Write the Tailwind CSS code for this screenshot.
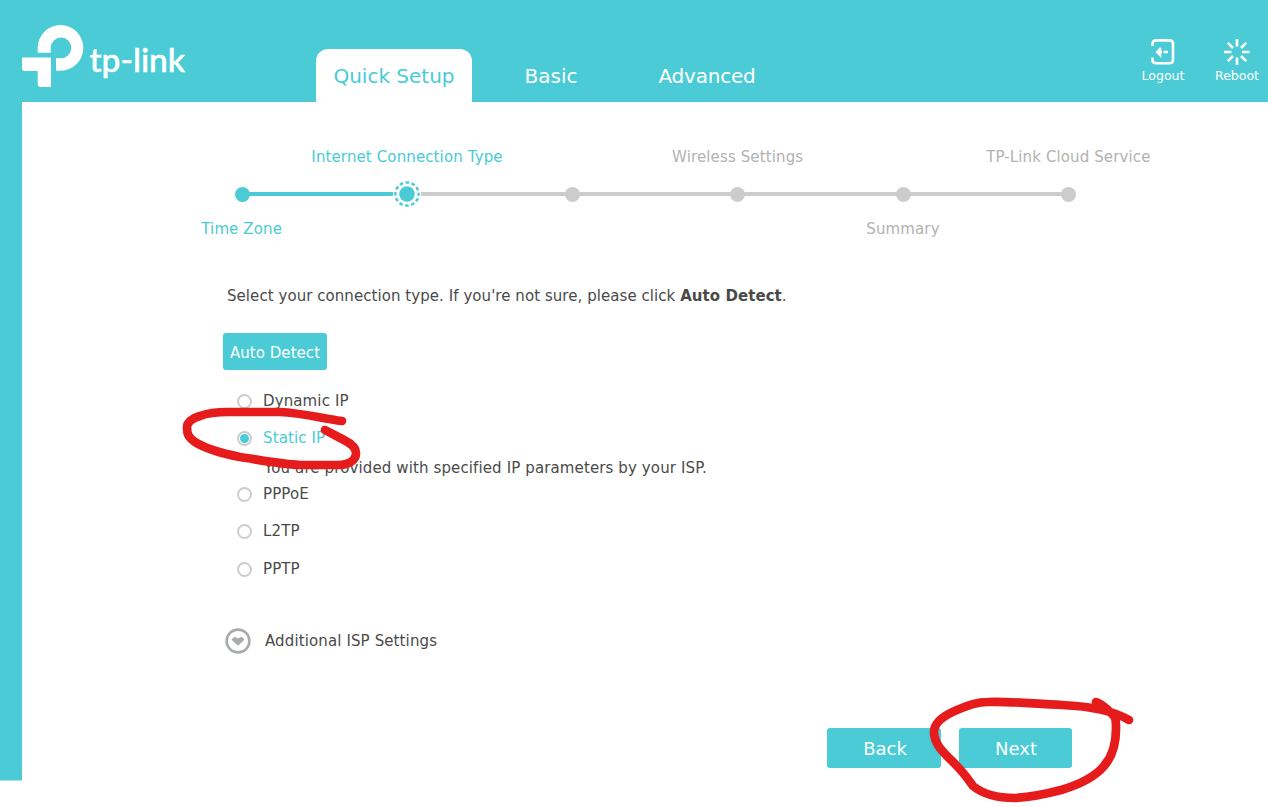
<!DOCTYPE html>
<html lang="en">
<head>
<meta charset="utf-8">
<title>Quick Setup</title>
<script src="https://cdn.jsdelivr.net/npm/@tailwindcss/browser@4"></script>
</head>
<body class="bg-white">
<div class="relative flex h-[807px] w-[1268px] flex-col overflow-hidden bg-white font-['Verdana','DejaVu_Sans',sans-serif] text-[15px] tracking-[0.12px] text-[#4a4a4a]">
  <header class="flex h-[102px] shrink-0 bg-[#4acbd6] tracking-normal text-white">
    <div class="w-[316px]">
      <svg class="block" width="220" height="102" viewBox="0 0 220 102" fill="#fff">
        <path d="M37.7 52.8V47.8A22.8 22.8 0 1 1 60.5 70.7H56V58.2H60.5A10.3 10.3 0 1 0 50.7 47.8V52.8Z"/>
        <path d="M22 57.5H51V87H41Q37.7 87 37.7 83.7V70.9H25Q22 70.9 22 68Z"/>
        <text x="89.5" y="71.5" font-family="Lato, sans-serif" font-size="33" font-weight="500" stroke="#fff" stroke-width=".5" textLength="95.5" lengthAdjust="spacingAndGlyphs">tp-link</text>
      </svg>
    </div>
    <nav class="flex items-end text-[20px]">
      <a class="flex h-[53px] w-[156px] items-center justify-center rounded-t-[12px] bg-white text-[#4acbd6]"><span>Quick Setup</span></a>
      <a class="flex h-[53px] w-[157px] items-center justify-center pl-px"><span>Basic</span></a>
      <a class="flex h-[53px] w-[156px] items-center justify-center tracking-[-0.2px]"><span>Advanced</span></a>
    </nav>
    <div class="ml-auto flex pt-[38px] text-[12.5px] leading-[20px]">
      <a class="flex w-[74px] flex-col items-center">
        <svg width="28" height="28" viewBox="0 0 28 28" fill="none" stroke="#fff" stroke-width="2.6"><path d="M3.4 8V6Q3.4 2.4 7 2.4H20.5Q24 2.4 24 6V21.8Q24 25.2 20.5 25.2H7Q3.4 25.2 3.4 21.8V19.5"/><path d="M11.5 9.8L7.5 14L11.5 18.2V9.8" fill="#fff" stroke-width="1.5"/><path d="M8.5 14H13M14.5 14H19"/></svg>
        <span>Logout</span>
      </a>
      <a class="flex w-[74px] flex-col items-center">
        <svg width="28" height="28" viewBox="0 0 28 28" stroke="#fff" stroke-width="2.6"><path d="M14 1V8.5M14 19.5V27M1 14H8.5M19 14H26.5M4.8 4.8L10 10M18 18L23.2 23.2M4.8 23.2L10 18M18 10L23.2 4.8"/></svg>
        <span>Reboot</span>
      </a>
      <div class="-mr-[6px]"></div>
    </div>
  </header>
  <div class="flex grow">
    <aside class="h-[679px] w-[22px] shrink-0 border-b border-[#a5e5eb] bg-[#4acbd6]"></aside>
    <main class="flex grow flex-col pt-[44px]">
      <section class="ml-[137px] w-[992px] text-[#b2b2b2]">
        <div class="grid h-[20px] grid-cols-6 leading-[22px] whitespace-nowrap">
          <span></span>
          <span class="flex justify-center text-[#4acbd6]">Internet Connection Type</span>
          <span></span>
          <span class="flex justify-center">Wireless Settings</span>
          <span></span>
          <span class="flex justify-center">TP-Link Cloud Service</span>
        </div>
        <svg class="block" width="992" height="52" viewBox="0 0 992 52">
          <path d="M83 28H234" stroke="#4acbd6" stroke-width="4"/>
          <path d="M262 28H909" stroke="#ccc" stroke-width="4"/>
          <g fill="#4acbd6"><circle cx="83.5" cy="28.5" r="7.5"/><circle cx="248" cy="28" r="7.8"/></g>
          <circle cx="248" cy="28" r="11.6" fill="none" stroke="#4acbd6" stroke-width="2.5" stroke-dasharray="3.6 2.4737" stroke-dashoffset="1.8"/>
          <g fill="#ccc"><circle cx="413.5" cy="28.5" r="7.5"/><circle cx="578.5" cy="28.5" r="7.5"/><circle cx="744.5" cy="28.5" r="7.5"/><circle cx="909.5" cy="28.5" r="7.5"/></g>
        </svg>
        <div class="grid h-[22px] grid-cols-6 leading-[22px] whitespace-nowrap">
          <span class="flex justify-center text-[#4acbd6]">Time Zone</span>
          <span></span><span></span><span></span>
          <span class="flex justify-center">Summary</span>
        </div>
      </section>
      <section class="ml-[201px]">
        <p class="mt-[45px] ml-[4px] leading-[22px] tracking-[0.06px]">Select your connection type. If you're not sure, please click <b>Auto Detect</b>.</p>
        <button class="mt-[26px] flex h-[37px] w-[104px] items-center justify-center rounded-[3px] bg-[#4acbd6] pt-[3px] tracking-[0.05px] whitespace-nowrap text-white">Auto Detect</button>
        <div class="mt-[20px] ml-[14px] leading-[22px]">
          <label class="flex h-[22px] items-center gap-[11px]"><i class="size-[15px] rounded-full border-2 border-[#ccc] bg-white"></i>Dynamic IP</label>
          <label class="mt-[15px] flex h-[22px] items-center gap-[11px] text-[#4acbd6]"><i class="flex size-[15px] items-center justify-center rounded-full border-2 border-[#ccc] bg-white"><i class="size-[9px] rounded-full bg-[#4acbd6]"></i></i>Static IP</label>
          <p class="mt-[8px] ml-[27px] h-[22px]">You are provided with specified IP parameters by your ISP.</p>
          <label class="mt-[4px] flex h-[22px] items-center gap-[11px]"><i class="size-[15px] rounded-full border-2 border-[#ccc] bg-white"></i>PPPoE</label>
          <label class="mt-[15px] flex h-[22px] items-center gap-[11px]"><i class="size-[15px] rounded-full border-2 border-[#ccc] bg-white"></i>L2TP</label>
          <label class="mt-[16px] flex h-[22px] items-center gap-[11px]"><i class="size-[15px] rounded-full border-2 border-[#ccc] bg-white"></i>PPTP</label>
        </div>
        <div class="mt-[47px] ml-[2px] flex h-[28px] items-center gap-[14px]">
          <svg width="26" height="26" viewBox="0 0 26 26"><circle cx="13" cy="13" r="11.4" fill="none" stroke="#a9abae" stroke-width="2.6"/><path d="M7.6 11.7L9.9 9.7L13 11.4L16.1 9.7L18.4 11.7L13 16.6Z" fill="#a9abae" stroke="#a9abae" stroke-width="1.6" stroke-linejoin="round"/></svg>
          <span class="pt-px">Additional ISP Settings</span>
        </div>
      </section>
      <div class="mt-[73px] ml-[805px] flex gap-[18px] text-[18px] tracking-normal text-white">
        <button class="h-[40px] w-[114px] rounded-[3px] bg-[#4acbd6] pl-[2px]">Back</button>
        <button class="h-[40px] w-[113px] rounded-[3px] bg-[#4acbd6] pl-px">Next</button>
      </div>
    </main>
  </div>
  <svg class="pointer-events-none absolute top-0 left-0" width="1268" height="807" viewBox="0 0 1268 807" fill="none" stroke="#e61c1c" stroke-width="8.7" stroke-linecap="round" stroke-linejoin="round">
    <path d="M342 421C320 418 302 413 280 412H228C214 412 205 414 200 416C193 418 187 422 187 427C187 434 188 437 195 442C206 449 220 453 240 457C260 460 280 464 300 465H338C348 465 356 461 356 453C356 447 350 443 344 440L325 430"/>
    <path d="M1096 702C1104 705 1109 711 1112 714C1116 717 1116 721 1116 729C1116 745 1112 757 1104 766C1094 778 1078 785 1061 790C1046 794 1030 797 1015 798C999 798 984 795 973 786C966 776 961 770 955 764C943 752 934 744 934 732C934 722 945 715 957 710C969 705 977 702 988 702C1010 701 1035 704 1062 705C1085 706 1110 709 1129 720"/>
  </svg>
</div>
</body>
</html>
